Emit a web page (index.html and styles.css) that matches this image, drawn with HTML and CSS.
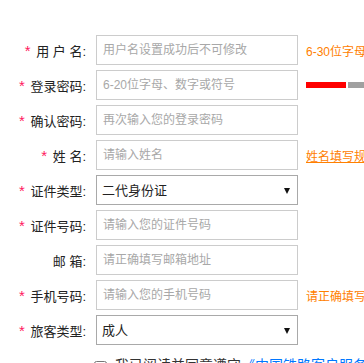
FILE: index.html
```html
<!DOCTYPE html>
<html lang="zh-CN">
<head>
    <meta charset="UTF-8">
    <meta name="viewport" content="width=device-width, initial-scale=1.0">
    <title>注册</title>
    <link rel="stylesheet" href="styles.css">
</head>
<body>
    <form class="reg-form">
        <div class="row">
            <label class="label"><span class="req">*</span> 用 户 名:</label>
            <input class="field" type="text" placeholder="用户名设置成功后不可修改">
            <span class="tip">6-30位字母、数字或“_”，字母开头</span>
        </div>
        <div class="row">
            <label class="label"><span class="req">*</span> 登录密码:</label>
            <input class="field" type="password" placeholder="6-20位字母、数字或符号">
            <span class="strength"><i class="bar on"></i><i class="bar"></i><i class="bar"></i></span>
        </div>
        <div class="row">
            <label class="label"><span class="req">*</span> 确认密码:</label>
            <input class="field" type="password" placeholder="再次输入您的登录密码">
        </div>
        <div class="row">
            <label class="label"><span class="req">*</span> 姓 名:</label>
            <input class="field" type="text" placeholder="请输入姓名">
            <a class="tip tip-link" href="#">姓名填写规则（用于身份核验，请正确填写）</a>
        </div>
        <div class="row">
            <label class="label"><span class="req">*</span> 证件类型:</label>
            <div class="select-wrap">
                <select class="select">
                    <option>二代身份证</option>
                    <option>港澳居民来往内地通行证</option>
                    <option>台湾居民来往大陆通行证</option>
                    <option>护照</option>
                </select>
            </div>
        </div>
        <div class="row">
            <label class="label"><span class="req">*</span> 证件号码:</label>
            <input class="field" type="text" placeholder="请输入您的证件号码">
        </div>
        <div class="row">
            <label class="label">邮 箱:</label>
            <input class="field" type="text" placeholder="请正确填写邮箱地址">
        </div>
        <div class="row">
            <label class="label"><span class="req">*</span> 手机号码:</label>
            <input class="field" type="text" placeholder="请输入您的手机号码">
            <span class="tip">请正确填写手机号码，稍后将向该手机号码发送短信验证码</span>
        </div>
        <div class="row">
            <label class="label"><span class="req">*</span> 旅客类型:</label>
            <div class="select-wrap">
                <select class="select">
                    <option>成人</option>
                    <option>儿童</option>
                    <option>学生</option>
                    <option>残疾军人</option>
                </select>
            </div>
        </div>
        <div class="agree">
            <input class="check" type="checkbox">
            <span>我已阅读并同意遵守<a href="#" class="agree-link">《中国铁路客户服务中心网站服务条款》</a></span>
        </div>
    </form>
</body>
</html>
```
FILE: styles.css
```css
html, body {
    margin: 0;
    padding: 0;
    overflow: hidden;
    background: #fff;
}
body {
    font-family: "Liberation Sans", "Noto Sans CJK SC", sans-serif;
    font-size: 12px;
    color: #333;
}
.reg-form {
    padding-top: 35px;
    display: flex;
    flex-direction: column;
    gap: 5px;
    width: 900px;
}
.row {
    display: flex;
    align-items: center;
    height: 30px;
    white-space: nowrap;
}
.label {
    width: 86px;
    padding-right: 10px;
    text-align: right;
    font-size: 13px;
    color: #222;
}
.req {
    color: #ff1a5e;
    font-size: 15px;
    margin-right: 2px;
}
.field {
    box-sizing: border-box;
    width: 202px;
    height: 30px;
    margin: 0;
    padding: 0 6px;
    border: 1px solid #ccc;
    border-radius: 0;
    font-family: inherit;
    font-size: 12px;
    color: #333;
    outline: none;
}
.field::placeholder {
    color: #a8a8a8;
}
.tip {
    margin-left: 8px;
    color: #ff8000;
    font-size: 12px;
}
.tip-link {
    text-decoration: underline;
}
.strength {
    margin-left: 8px;
    display: flex;
    gap: 2px;
}
.bar {
    display: block;
    width: 40px;
    height: 6px;
    background: #a0a0a0;
}
.bar.on {
    background: #f00;
}
.select-wrap {
    position: relative;
    width: 202px;
    height: 30px;
}
.select-wrap::after {
    content: "";
    position: absolute;
    right: 8px;
    top: 13px;
    border-left: 3px solid transparent;
    border-right: 3px solid transparent;
    border-top: 6px solid #111;
    pointer-events: none;
}
.select {
    appearance: none;
    -webkit-appearance: none;
    box-sizing: border-box;
    width: 100%;
    height: 30px;
    margin: 0;
    padding: 0 5px;
    border: 1px solid #a9a9a9;
    border-radius: 0;
    background: #fff;
    font-family: inherit;
    font-size: 13px;
    color: #222;
    outline: none;
}
.agree {
    display: flex;
    align-items: flex-start;
    margin-top: 6px;
    padding-left: 92px;
    white-space: nowrap;
    font-size: 14px;
    line-height: 18px;
    color: #333;
}
.check {
    margin: 5px 8px 0 2px;
    width: 13px;
    height: 13px;
}
.agree-link {
    color: #0077ff;
    text-decoration: none;
}
```
